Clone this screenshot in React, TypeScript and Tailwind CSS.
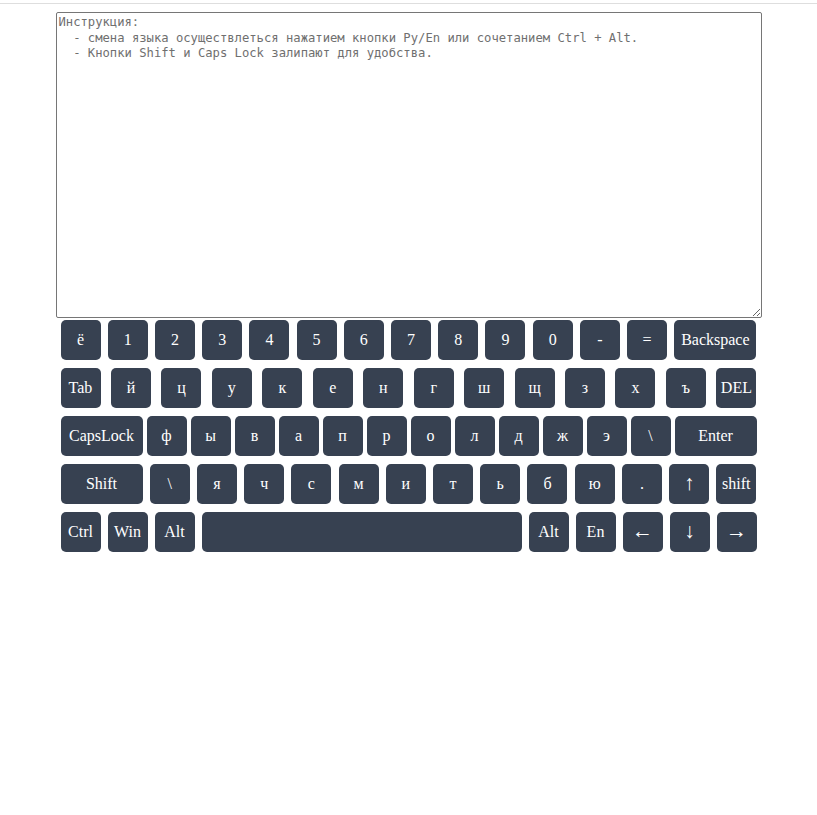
const rows: { label: string; w?: string }[][] = [
  [
    { label: "ё" }, { label: "1" }, { label: "2" }, { label: "3" }, { label: "4" },
    { label: "5" }, { label: "6" }, { label: "7" }, { label: "8" }, { label: "9" },
    { label: "0" }, { label: "-" }, { label: "=" }, { label: "Backspace", w: "wide" },
  ],
  [
    { label: "Tab" }, { label: "й" }, { label: "ц" }, { label: "у" }, { label: "к" },
    { label: "е" }, { label: "н" }, { label: "г" }, { label: "ш" }, { label: "щ" },
    { label: "з" }, { label: "х" }, { label: "ъ" }, { label: "DEL" },
  ],
  [
    { label: "CapsLock", w: "wide" }, { label: "ф" }, { label: "ы" }, { label: "в" },
    { label: "а" }, { label: "п" }, { label: "р" }, { label: "о" }, { label: "л" },
    { label: "д" }, { label: "ж" }, { label: "э" }, { label: "\\" }, { label: "Enter", w: "wide" },
  ],
  [
    { label: "Shift", w: "wide" }, { label: "\\" }, { label: "я" }, { label: "ч" },
    { label: "с" }, { label: "м" }, { label: "и" }, { label: "т" }, { label: "ь" },
    { label: "б" }, { label: "ю" }, { label: "." }, { label: "↑", w: "arrow" }, { label: "shift" },
  ],
  [
    { label: "Ctrl" }, { label: "Win" }, { label: "Alt" }, { label: "", w: "space" },
    { label: "Alt" }, { label: "En" }, { label: "←", w: "arrow" }, { label: "↓", w: "arrow" },
    { label: "→", w: "arrow" },
  ],
];

const instruction = `Инструкция:
  - смена языка осуществлеться нажатием кнопки Ру/En или сочетанием Ctrl + Alt.
  - Кнопки Shift и Caps Lock залипают для удобства.`;

export default function App() {
  return (
    <div className="min-h-screen bg-white">
      <div className="mt-[3px] border-t border-[#dedede]" />

      <div className="w-[706px] mx-auto mt-[8px]">
        <textarea
          placeholder={instruction}
          className="block w-full h-[306px] border border-[#767676] rounded-[2px] px-[2px] py-[2px] font-['DejaVu_Sans_Mono',monospace] text-[12.2px] leading-[15.5px] text-[#222] placeholder:text-[#6f6f6f] outline-none resize"
        />

        {/* Keyboard */}
        <div className="mt-[2px] px-[5px] flex flex-col gap-2">
          {rows.map((row, i) => (
            <div key={i} className="flex justify-between">
              {row.map((key, j) => (
                <button
                  key={j}
                  className={`h-10 rounded-[5px] bg-[#374151] text-white font-['Liberation_Serif',serif] flex items-center justify-center ${
                    key.w === "wide" ? "w-[82px]" : key.w === "space" ? "w-[320px]" : "w-10"
                  } ${key.w === "arrow" ? "text-[21px]" : "text-[16px]"}`}
                >
                  {key.label}
                </button>
              ))}
            </div>
          ))}
        </div>
      </div>
    </div>
  );
}
